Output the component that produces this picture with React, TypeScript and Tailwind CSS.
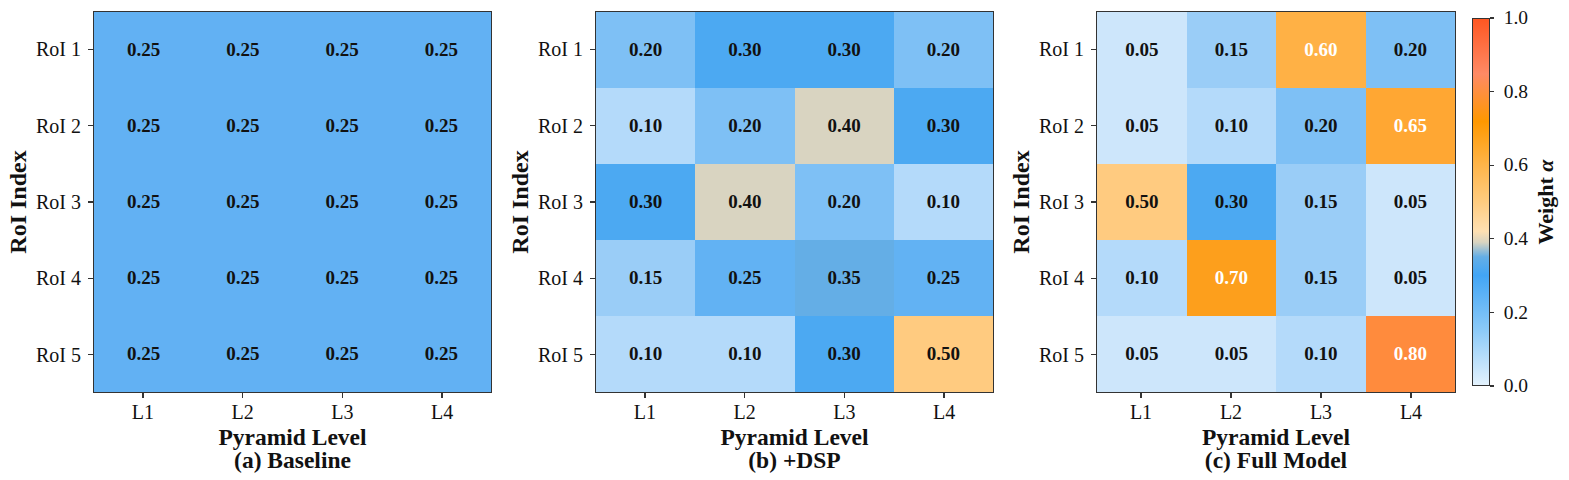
import React from "react";

type Cell = { v: string; c: string; w?: boolean };

const A = "#62b1f3";
const C05 = "#cde6fb";
const C10 = "#b4dafa";
const C15 = "#9acdf7";
const C20 = "#7ec0f5";
const C25 = "#62b2f3";
const C30 = "#4ca9f2";
const C35 = "#64aee6";
const C40 = "#d9d4c1";
const C50 = "#ffcb80";

const cell = (v: string, c: string, w = false): Cell => ({ v, c, w });

const baseline: Cell[][] = Array.from({ length: 5 }, () => Array.from({ length: 4 }, () => cell("0.25", A)));

const dsp: Cell[][] = [
  [cell("0.20", C20), cell("0.30", C30), cell("0.30", C30), cell("0.20", C20)],
  [cell("0.10", C10), cell("0.20", C20), cell("0.40", C40), cell("0.30", C30)],
  [cell("0.30", C30), cell("0.40", C40), cell("0.20", C20), cell("0.10", C10)],
  [cell("0.15", C15), cell("0.25", C25), cell("0.35", C35), cell("0.25", C25)],
  [cell("0.10", C10), cell("0.10", C10), cell("0.30", C30), cell("0.50", C50)],
];

const full: Cell[][] = [
  [cell("0.05", C05), cell("0.15", C15), cell("0.60", "#ffb145", true), cell("0.20", C20)],
  [cell("0.05", C05), cell("0.10", C10), cell("0.20", C20), cell("0.65", "#ffa733", true)],
  [cell("0.50", C50), cell("0.30", C30), cell("0.15", C15), cell("0.05", C05)],
  [cell("0.10", C10), cell("0.70", "#fd9f1c", true), cell("0.15", C15), cell("0.05", C05)],
  [cell("0.05", C05), cell("0.05", C05), cell("0.10", C10), cell("0.80", "#ff8b3d", true)],
];

const serif = { fontFamily: '"Liberation Serif", "Times New Roman", serif' };

const Panel = ({ data, title, wide }: { data: Cell[][]; title: string; wide: boolean }) => (
  <div className="flex items-start shrink-0">
    {/* y axis title */}
    <div className="w-[36px] h-[382px] shrink-0 flex items-center justify-center">
      <span className="-rotate-90 whitespace-nowrap text-[24px] font-bold leading-none text-[#111]">RoI Index</span>
    </div>
    {/* row labels */}
    <div className="w-[52px] h-[382px] shrink-0 flex flex-col pr-[7px]">
      {[1, 2, 3, 4, 5].map((i) => (
        <div key={i} className="flex-1 flex items-center justify-end text-[20px] leading-none text-[#111] whitespace-nowrap">
          RoI {i}
        </div>
      ))}
    </div>
    <div className="w-[5px] h-[382px] shrink-0 flex flex-col">
      {[1, 2, 3, 4, 5].map((i) => (
        <div key={i} className="flex-1 flex items-center">
          <div className="w-[5px] h-[1.3px] bg-[#333]" />
        </div>
      ))}
    </div>
    {/* heatmap + x axis */}
    <div className={wide ? "w-[399px] shrink-0 flex flex-col" : "w-[360px] shrink-0 flex flex-col"}>
      <div className="h-[382px] grid grid-cols-4 grid-rows-5 border-[1.3px] border-[#333]">
        {data.flat().map((d, i) => (
          <div
            key={i}
            className={
              d.w
                ? "flex items-center justify-center text-[19px] font-bold text-white"
                : "flex items-center justify-center text-[19px] font-bold text-[#111]"
            }
            style={{ backgroundColor: d.c }}
          >
            {d.v}
          </div>
        ))}
      </div>
      <div className="grid grid-cols-4 h-[5px]">
        {[0, 1, 2, 3].map((i) => (
          <div key={i} className="flex justify-center">
            <div className="w-[1.3px] h-[5px] bg-[#333]" />
          </div>
        ))}
      </div>
      <div className="grid grid-cols-4 mt-[3px] leading-[22px] text-[20px] text-[#111]">
        {["L1", "L2", "L3", "L4"].map((l) => (
          <div key={l} className="text-center">
            {l}
          </div>
        ))}
      </div>
      <div className="mt-[2px] text-center text-[23.5px] font-bold leading-[24px] text-[#111]">Pyramid Level</div>
      <div className="text-center text-[23.5px] font-bold leading-[23px] text-[#111]">{title}</div>
    </div>
  </div>
);

const Colorbar = () => (
  <div className="flex items-start shrink-0 ml-[16px] pt-[7px]">
    <div className="w-[18px] h-[368px] shrink-0 border-[1.3px] border-[#333] bg-[linear-gradient(to_top,#e3f2fd_0%,#8ccaf8_15%,#42a5f5_30%,#64aee6_35%,#d9d4c1_39%,#ffe0b2_42%,#ffcc80_50%,#ffb54a_60%,#ff9800_72%,#ff8a65_85%,#ff5722_100%)]" />
    <div className="w-[38px] h-[368px] shrink-0 flex flex-col justify-between">
      {["1.0", "0.8", "0.6", "0.4", "0.2", "0.0"].map((t) => (
        <div key={t} className="h-0 flex items-center">
          <div className="w-[5px] h-[1.3px] bg-[#333]" />
          <span className="ml-[10px] text-[19.5px] leading-none text-[#111]">{t}</span>
        </div>
      ))}
    </div>
    <div className="w-[36px] h-[368px] shrink-0 flex items-center justify-center">
      <span className="-rotate-90 whitespace-nowrap text-[22px] font-bold leading-none text-[#111]">
        Weight <span className="italic">α</span>
      </span>
    </div>
  </div>
);

export default function App() {
  return (
    <div className="w-[1569px] h-[480px] bg-white pt-[11px] flex overflow-hidden" style={serif}>
      <Panel data={baseline} title="(a) Baseline" wide />
      <div className="w-[10px] shrink-0" />
      <Panel data={dsp} title="(b) +DSP" wide />
      <div className="w-[9px] shrink-0" />
      <Panel data={full} title="(c) Full Model" wide={false} />
      <Colorbar />
    </div>
  );
}
